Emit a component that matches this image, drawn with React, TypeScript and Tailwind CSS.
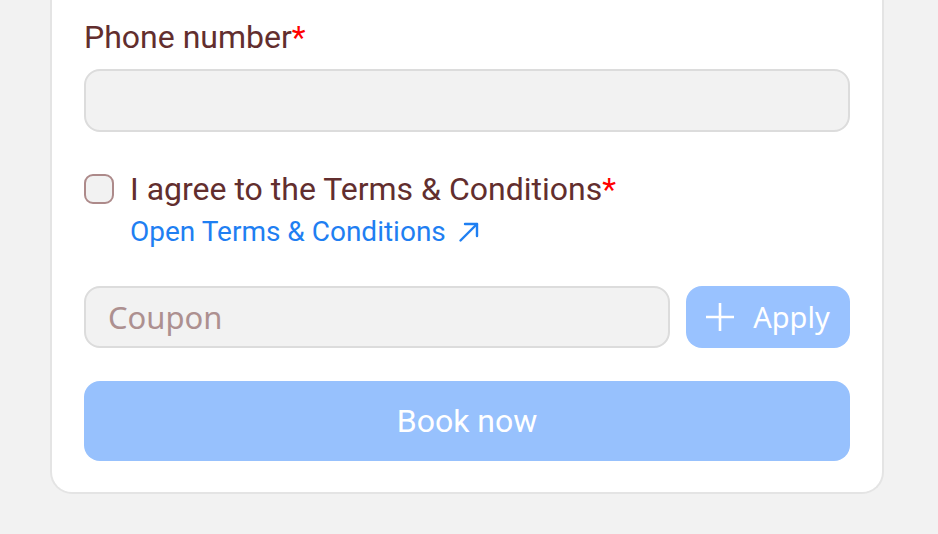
export default function App() {
  return (
    <div className="w-[938px] h-[534px] overflow-hidden bg-[#f2f2f2] font-['Roboto',sans-serif]">
      <div className="flex flex-col mx-[50px] -mt-[20px] w-[834px] bg-white border-2 border-t-0 border-[#e4e4e4] rounded-b-[22px] px-[32px] pb-[31px] pt-[37px]">
        <label className="text-[32px] leading-[40px] text-[#622e2e]">
          Phone number<span className="text-[#ff0000]">*</span>
        </label>
        <input className="mt-[12px] h-[63px] w-full rounded-[16px] border-2 border-[#dcdcdc] bg-[#f2f2f2] outline-none" />

        <div className="mt-[40px] flex items-start gap-[16px]">
          <div className="mt-[2px] h-[30px] w-[30px] shrink-0 rounded-[9px] border-2 border-[#ad8a8a] bg-[#f2f2f2]" />
          <div className="flex flex-col">
            <span className="text-[32px] leading-[34px] text-[#622e2e]">
              I agree to the Terms &amp; Conditions<span className="text-[#ff0000]">*</span>
            </span>
            <a className="mt-[9px] flex items-center gap-[12px] text-[28px] leading-[34px] text-[#1f7ff2]">
              Open Terms &amp; Conditions
              <svg width="22" height="22" viewBox="0 0 22 22" fill="none" stroke="currentColor" strokeWidth="2.4" strokeLinecap="round" strokeLinejoin="round">
                <path d="M2.5 19.5 L19 3" />
                <path d="M7 3 H19 V15" />
              </svg>
            </a>
          </div>
        </div>

        <div className="mt-[37px] flex gap-[16px]">
          <input
            placeholder="Coupon"
            className="h-[62px] flex-1 rounded-[16px] border-2 border-[#dcdcdc] bg-[#f2f2f2] px-[22px] font-['Noto_Sans',sans-serif] text-[31px] text-[#622e2e] outline-none placeholder:text-[#ad9090]"
          />
          <button className="flex h-[62px] w-[164px] items-center justify-center gap-[19px] rounded-[16px] bg-[#99c2ff] font-['Noto_Sans',sans-serif] text-[29px] text-white">
            <svg width="28" height="28" viewBox="0 0 28 28" fill="none" stroke="currentColor" strokeWidth="2.6">
              <path d="M14 0 V28 M0 14 H28" />
            </svg>
            Apply
          </button>
        </div>

        <button className="mt-[33px] h-[80px] w-full rounded-[16px] bg-[#97c1fd] text-[32px] text-white">
          Book now
        </button>
      </div>
    </div>
  );
}
